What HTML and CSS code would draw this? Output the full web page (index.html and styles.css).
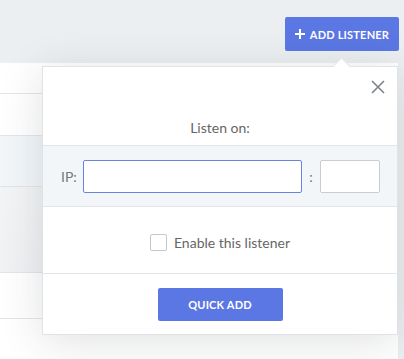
FILE: index.html
```html
<!DOCTYPE html>
<html>
<head>
<meta charset="utf-8">
<link rel="stylesheet" href="styles.css">
</head>
<body>
<div class="page">
  <div class="header">
    <button class="btn add-btn">
      <svg class="plus" width="10" height="10" viewBox="0 0 10 10"><path d="M5 0v10M0 5h10" stroke="#fff" stroke-width="2"/></svg>
      ADD LISTENER
    </button>
  </div>
  <div class="card">
    <div class="row r1"></div>
    <div class="row r2"></div>
    <div class="row r3"></div>
    <div class="row r4"></div>
    <div class="row r5"></div>
    <div class="row r6"></div>
  </div>

  <div class="popover">
    <div class="arrow"></div>
    <div class="pop-top">
      <button class="close" aria-label="Close">
        <svg width="14" height="14" viewBox="0 0 14 14"><path d="M1 1L13 13M13 1L1 13" stroke="#7b8386" stroke-width="1.6"/></svg>
      </button>
      <div class="listen">Listen on:</div>
    </div>
    <div class="pop-fields">
      <span class="lbl">IP:</span>
      <input class="inp ip" type="text">
      <span class="colon">:</span>
      <input class="inp port" type="text">
    </div>
    <div class="pop-check">
      <span class="box"></span>
      <span class="check-label">Enable this listener</span>
    </div>
    <div class="pop-foot">
      <button class="btn quick">QUICK ADD</button>
    </div>
  </div>
</div>
</body>
</html>
```

FILE: styles.css
```css
* { box-sizing: border-box; }
html, body { margin: 0; padding: 0; }
body {
  width: 404px;
  height: 359px;
  overflow: hidden;
  background: #eceff1;
  font-family: "Lato", "Liberation Sans", sans-serif;
}
.page { position: relative; height: 359px; }
.header {
  height: 63px;
  display: flex;
  justify-content: flex-end;
  align-items: flex-start;
  padding-top: 17px;
  padding-right: 5px;
}
.btn {
  border: 0;
  background: #5b77e3;
  color: #fff;
  font-family: inherit;
  font-weight: 700;
  font-size: 11px;
  letter-spacing: 0.2px;
  border-radius: 2px;
  display: flex;
  align-items: center;
  justify-content: center;
  padding: 0;
}
.add-btn {
  width: 114px;
  height: 34px;
  gap: 5px;
}
.card {
  margin-right: 6px;
  background: #fff;
  height: 296px;
  display: flex;
  flex-direction: column;
}
.row { border-bottom: 1px solid #e3e6e8; }
.r1 { height: 31px; }
.r2 { height: 42px; }
.r3 { height: 51px; background: #f2f6f9; }
.r4 { height: 86px; background: linear-gradient(160deg, #f3f4f5 0%, #eef0f2 60%, #e8ecee 100%); }
.r5 { height: 46px; }
.r6 { flex: 1; border-bottom: 0; }

.popover {
  position: absolute;
  left: 42px;
  top: 66px;
  width: 356px;
  height: 269px;
  background: #fff;
  border: 1px solid #e0e3e5;
  box-shadow: 0 6px 40px rgba(40, 50, 60, 0.15);
  display: flex;
  flex-direction: column;
  color: #666;
}
.arrow {
  position: absolute;
  top: -7px;
  left: 292px;
  width: 13px;
  height: 13px;
  background: #fff;
  transform: rotate(45deg);
  border-top: 1px solid #e0e3e5;
  border-left: 1px solid #e0e3e5;
}
.pop-top {
  position: relative;
  height: 78px;
  display: flex;
  align-items: flex-end;
  justify-content: center;
  padding-bottom: 9px;
}
.close {
  position: absolute;
  right: 12px;
  top: 13px;
  width: 14px;
  height: 14px;
  border: 0;
  padding: 0;
  background: none;
  display: block;
}
.close svg { display: block; }
.listen { font-size: 14px; color: #666; }
.pop-fields {
  height: 62px;
  background: #f3f6f8;
  border-top: 1px solid #e3e6e8;
  border-bottom: 1px solid #e3e6e8;
  display: flex;
  align-items: center;
  padding-left: 18px;
}
.lbl { font-size: 14px; color: #777; width: 22px; }
.inp {
  height: 33px;
  background: #fff;
  border: 1px solid #ccc;
  border-radius: 2px;
  padding: 0;
  margin: 0;
}
.ip { width: 219px; border-color: #6a83e2; }
.colon { font-size: 14px; color: #777; width: 18px; text-align: center; }
.port { width: 60px; }
.pop-check {
  height: 67px;
  border-bottom: 1px solid #e3e6e8;
  display: flex;
  align-items: center;
  justify-content: center;
  gap: 7px;
  padding-top: 4px;
}
.box {
  width: 17px;
  height: 17px;
  border: 1px solid #c8c8c8;
  border-radius: 2px;
  background: #fff;
}
.check-label { font-size: 14px; color: #666; }
.pop-foot {
  flex: 1;
  display: flex;
  justify-content: center;
  align-items: flex-start;
  padding-top: 14px;
}
.quick {
  width: 125px;
  height: 33px;
}
```
